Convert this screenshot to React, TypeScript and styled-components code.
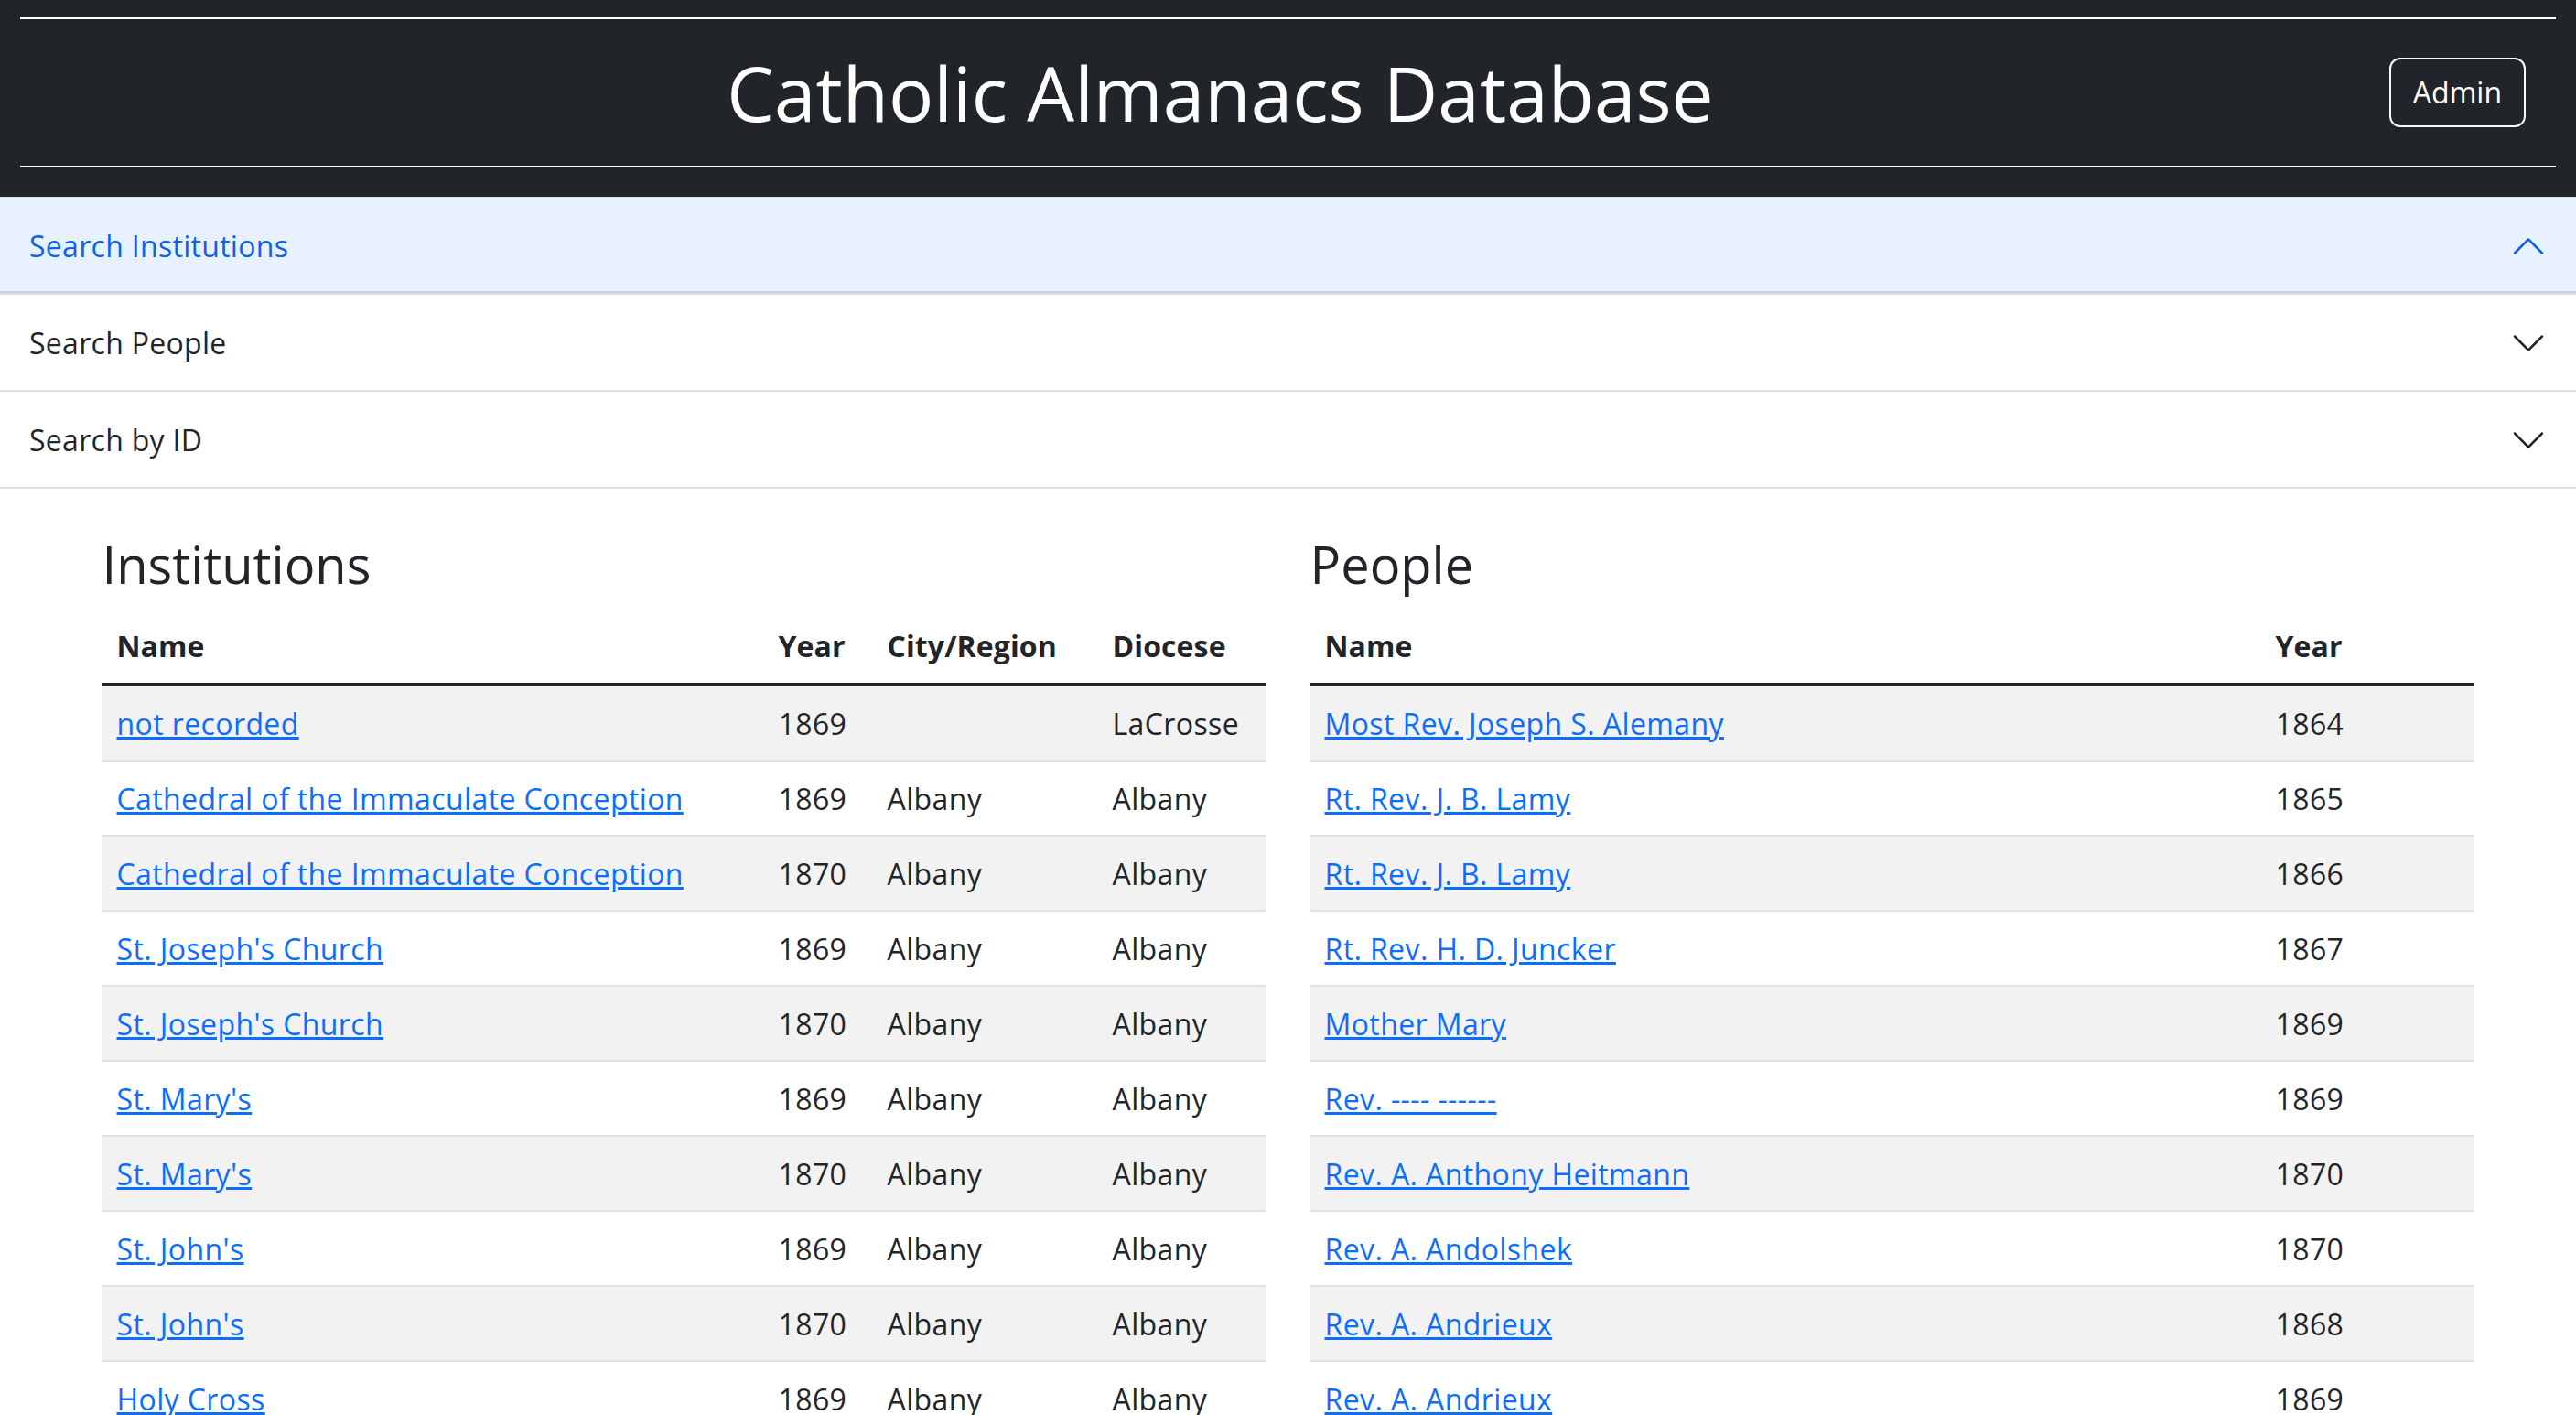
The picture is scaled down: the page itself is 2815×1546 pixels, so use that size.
import React from "react";
import styled, { createGlobalStyle } from "styled-components";

const GlobalStyle = createGlobalStyle`
  html, body {
    margin: 0;
    padding: 0;
    background: #ffffff;
  }
  body {
    font-family: "Open Sans", "Noto Sans", "Liberation Sans", sans-serif;
    color: #212529;
    font-size: 32px;
    line-height: 48px;
  }
  * { box-sizing: border-box; }
`;

const HeaderBar = styled.header`
  background: #212529;
  padding: 19px 22px 32px;
`;

const Rule = styled.hr`
  margin: 0;
  border: 0;
  height: 2px;
  background: #ffffff;
`;

const TitleRow = styled.div`
  display: flex;
  align-items: center;
  height: 160px;
`;

const Title = styled.h1`
  flex: 1;
  margin: 0;
  padding-left: 34px;
  text-align: center;
  color: #ffffff;
  font-size: 82px;
  font-weight: 400;
  line-height: 1.2;
`;

const AdminButton = styled.button`
  margin-right: 33px;
  height: 76px;
  padding: 0 24px;
  background: transparent;
  color: #ffffff;
  border: 2px solid #f8f9fa;
  border-radius: 12px;
  font-family: inherit;
  font-size: 32px;
  line-height: 48px;
  cursor: pointer;
`;

const Accordion = styled.div`
  border-top: 1px solid #dee2e6;
`;

const AccordionItem = styled.div`
  border-bottom: 2px solid rgba(0, 0, 0, 0.125);
`;

const AccordionButton = styled.button<{ $open?: boolean }>`
  display: flex;
  align-items: center;
  justify-content: space-between;
  width: 100%;
  height: 104px;
  padding: 2px 32px 0;
  border: 0;
  margin: 0;
  font-family: inherit;
  font-size: 32px;
  line-height: 48px;
  letter-spacing: 0.3px;
  text-align: left;
  color: ${(p) => (p.$open ? "#0c63e4" : "#212529")};
  background: ${(p) => (p.$open ? "#e7f1ff" : "#ffffff")};
  box-shadow: ${(p) => (p.$open ? "inset 0 -2px 0 rgba(0, 0, 0, 0.125)" : "none")};
  cursor: pointer;
`;

const ChevronIcon = styled.svg<{ $open?: boolean }>`
  width: 40px;
  height: 40px;
  flex-shrink: 0;
  transform: ${(p) => (p.$open ? "rotate(-180deg)" : "none")};
`;

const Main = styled.main`
  width: 2592px;
  margin: 0 auto;
  padding-top: 49px;
  display: grid;
  grid-template-columns: 1fr 1fr;
  column-gap: 48px;
`;

const Section = styled.section`
  min-width: 0;
`;

const SectionTitle = styled.h3`
  margin: 0 0 16px;
  font-size: 56px;
  font-weight: 400;
  line-height: 1.2;
`;

const Table = styled.table`
  width: 100%;
  border-collapse: collapse;
  table-layout: fixed;
`;

const Col = styled.col<{ $w: number }>`
  width: ${(p) => p.$w}px;
`;

const HeadCell = styled.th`
  padding: 16px;
  text-align: left;
  font-weight: 700;
  font-size: 32px;
  line-height: 48px;
  letter-spacing: 0.1px;
  border-bottom: 4px solid #212529;
  white-space: nowrap;
`;

const Body = styled.tbody`
  tr:nth-child(odd) td {
    background: #f2f2f2;
  }
`;

const Cell = styled.td`
  padding: 17px 16px 15px;
  font-size: 32px;
  line-height: 48px;
  letter-spacing: 0.4px;
  border-bottom: 2px solid #dee2e6;
  white-space: nowrap;
  overflow: hidden;
`;

const RecordLink = styled.a`
  color: #0d6efd;
  text-decoration: underline;
`;

const Chevron = ({ open }: { open?: boolean }) => (
  <ChevronIcon $open={open} viewBox="0 0 16 16" aria-hidden="true">
    <path
      fill={open ? "#0c63e4" : "#212529"}
      fillRule="evenodd"
      d="M1.646 4.646a.5.5 0 0 1 .708 0L8 10.293l5.646-5.647a.5.5 0 0 1 .708.708l-6 6a.5.5 0 0 1-.708 0l-6-6a.5.5 0 0 1 0-.708z"
    />
  </ChevronIcon>
);

const institutions = [
  { name: "not recorded", year: "1869", city: "", diocese: "LaCrosse" },
  { name: "Cathedral of the Immaculate Conception", year: "1869", city: "Albany", diocese: "Albany" },
  { name: "Cathedral of the Immaculate Conception", year: "1870", city: "Albany", diocese: "Albany" },
  { name: "St. Joseph's Church", year: "1869", city: "Albany", diocese: "Albany" },
  { name: "St. Joseph's Church", year: "1870", city: "Albany", diocese: "Albany" },
  { name: "St. Mary's", year: "1869", city: "Albany", diocese: "Albany" },
  { name: "St. Mary's", year: "1870", city: "Albany", diocese: "Albany" },
  { name: "St. John's", year: "1869", city: "Albany", diocese: "Albany" },
  { name: "St. John's", year: "1870", city: "Albany", diocese: "Albany" },
  { name: "Holy Cross", year: "1869", city: "Albany", diocese: "Albany" },
];

const people = [
  { name: "Most Rev. Joseph S. Alemany", year: "1864" },
  { name: "Rt. Rev. J. B. Lamy", year: "1865" },
  { name: "Rt. Rev. J. B. Lamy", year: "1866" },
  { name: "Rt. Rev. H. D. Juncker", year: "1867" },
  { name: "Mother Mary", year: "1869" },
  { name: "Rev. ---- ------", year: "1869" },
  { name: "Rev. A. Anthony Heitmann", year: "1870" },
  { name: "Rev. A. Andolshek", year: "1870" },
  { name: "Rev. A. Andrieux", year: "1868" },
  { name: "Rev. A. Andrieux", year: "1869" },
];

const searches = [
  { label: "Search Institutions", open: true },
  { label: "Search People", open: false },
  { label: "Search by ID", open: false },
];

export default function App() {
  return (
    <>
      <GlobalStyle />
      <HeaderBar>
        <Rule />
        <TitleRow>
          <Title>Catholic Almanacs Database</Title>
          <AdminButton type="button">Admin</AdminButton>
        </TitleRow>
        <Rule />
      </HeaderBar>
      <Accordion>
        {searches.map((s) => (
          <AccordionItem key={s.label}>
            <AccordionButton type="button" $open={s.open}>
              <span>{s.label}</span>
              <Chevron open={s.open} />
            </AccordionButton>
          </AccordionItem>
        ))}
      </Accordion>
      <Main>
        <Section>
          <SectionTitle>Institutions</SectionTitle>
          <Table>
            <colgroup>
              <Col $w={723} />
              <Col $w={119} />
              <Col $w={246} />
              <Col $w={184} />
            </colgroup>
            <thead>
              <tr>
                <HeadCell>Name</HeadCell>
                <HeadCell>Year</HeadCell>
                <HeadCell>City/Region</HeadCell>
                <HeadCell>Diocese</HeadCell>
              </tr>
            </thead>
            <Body>
              {institutions.map((r, i) => (
                <tr key={i}>
                  <Cell>
                    <RecordLink href="#">{r.name}</RecordLink>
                  </Cell>
                  <Cell>{r.year}</Cell>
                  <Cell>{r.city}</Cell>
                  <Cell>{r.diocese}</Cell>
                </tr>
              ))}
            </Body>
          </Table>
        </Section>
        <Section>
          <SectionTitle>People</SectionTitle>
          <Table>
            <colgroup>
              <Col $w={1039} />
              <Col $w={233} />
            </colgroup>
            <thead>
              <tr>
                <HeadCell>Name</HeadCell>
                <HeadCell>Year</HeadCell>
              </tr>
            </thead>
            <Body>
              {people.map((r, i) => (
                <tr key={i}>
                  <Cell>
                    <RecordLink href="#">{r.name}</RecordLink>
                  </Cell>
                  <Cell>{r.year}</Cell>
                </tr>
              ))}
            </Body>
          </Table>
        </Section>
      </Main>
    </>
  );
}
